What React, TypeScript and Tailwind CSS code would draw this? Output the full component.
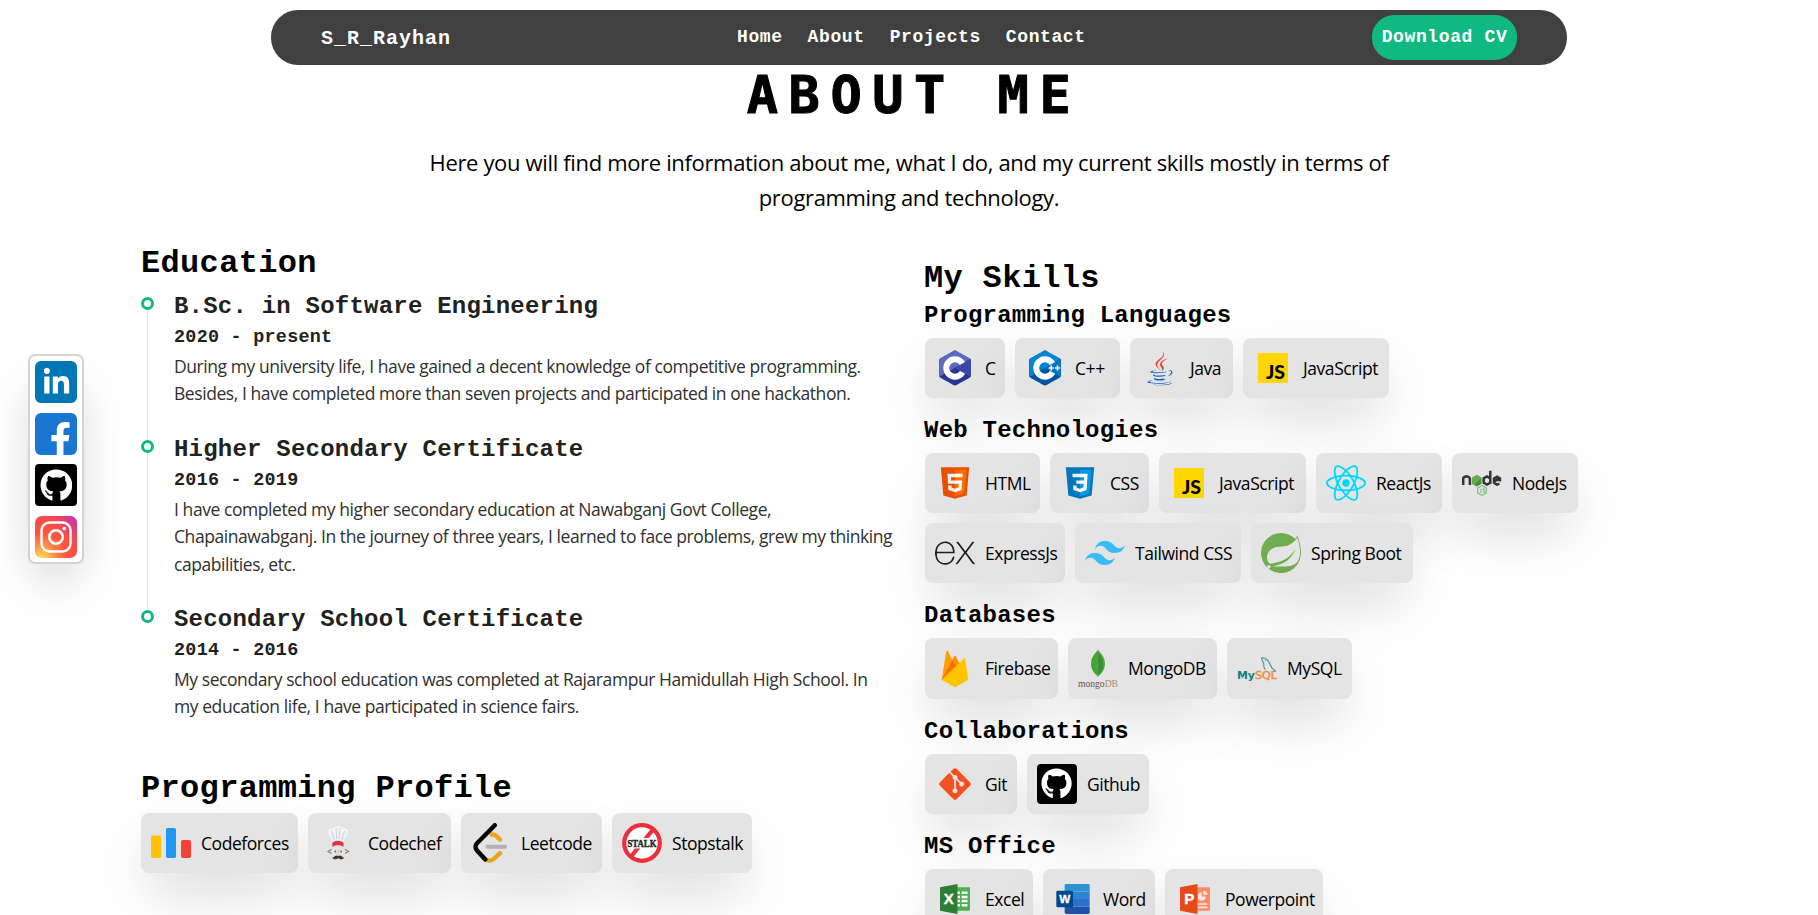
import React from 'react';
import { FaGithub, FaJava, FaLinkedinIn, FaFacebookF } from 'react-icons/fa';
import { SiExpress, SiTailwindcss, SiReact, SiSpring } from 'react-icons/si';

const MONO = "font-['Liberation_Mono',monospace] font-bold whitespace-pre";

const HEX =
  'M22.903,3.286c0.679-0.381,1.515-0.381,2.193,0c3.355,1.883,13.451,7.551,16.807,9.434C42.582,13.1,43,13.804,43,14.566c0,3.766,0,15.101,0,18.867c0,0.762-0.418,1.466-1.097,1.847c-3.355,1.883-13.451,7.551-16.807,9.434c-0.679,0.381-1.515,0.381-2.193,0c-3.355-1.883-13.451-7.551-16.807-9.434C5.418,34.899,5,34.196,5,33.434c0-3.766,0-15.101,0-18.867c0-0.762,0.418-1.466,1.097-1.847C9.451,10.837,19.549,5.169,22.903,3.286z';

function HexC({ base, top, side, plus }: { base: string; top: string; side: string; plus?: boolean }) {
  return (
    <svg viewBox="0 0 48 48" className="size-10">
      <path fill={base} d={HEX} />
      <path
        fill={top}
        d="M5.304,34.404C5.038,34.048,5,33.71,5,33.255c0-3.744,0-15.014,0-18.759c0-0.758,0.417-1.458,1.094-1.836c3.343-1.872,13.405-7.507,16.748-9.38c0.677-0.379,1.594-0.371,2.271,0.008c3.343,1.872,13.371,7.459,16.714,9.331c0.27,0.152,0.476,0.335,0.66,0.576L5.304,34.404z"
      />
      <circle cx="24" cy="24" r="10.5" fill="none" stroke="#fff" strokeWidth="7" />
      <path
        fill={side}
        d="M42.485,13.205c0.516,0.483,0.506,1.211,0.506,1.784c0,3.795-0.032,14.589,0.009,18.384c0.004,0.396-0.127,0.813-0.323,1.127L23.593,24L42.485,13.205z"
      />
      {plus && <path d="M28.5 24h6M31.5 21v6M36 24h6M39 21v6" stroke="#fff" strokeWidth="2" />}
    </svg>
  );
}

const IconC = () => <HexC base="#283593" top="#5c6bc0" side="#3949ab" />;
const IconCpp = () => <HexC base="#00549d" top="#0086d4" side="#0075c0" plus />;

const IconJava = () => (
  <svg viewBox="0 0 40 40" className="size-10">
    <defs>
      <linearGradient id="java" x1="0" y1="0" x2="0" y2="512" gradientUnits="userSpaceOnUse">
        <stop offset="0.5" stopColor="#f44336" />
        <stop offset="0.5" stopColor="#1565c0" />
      </linearGradient>
    </defs>
    <FaJava x={3} y={3.5} size={34} fill="url(#java)" />
  </svg>
);

const IconJs = () => (
  <svg viewBox="0 0 48 48" className="size-10">
    <path fill="#ffd600" d="M6,42V6h36v36H6z" />
    <text x="38.5" y="37.5" textAnchor="end" fontFamily="Lato" fontWeight="900" fontSize="22" textLength="23" lengthAdjust="spacingAndGlyphs">
      JS
    </text>
  </svg>
);

const IconHtml = () => (
  <svg viewBox="0 0 48 48" className="size-10">
    <path fill="#E65100" d="M41,5H7l3,34l14,4l14-4L41,5z" />
    <path fill="#FF6D00" d="M24 8L24 39.9 35.2 36.7 37.7 8z" />
    <path fill="#fff" d="M24,25v-4h8.6l-0.7,11.5L24,35.1v-4.2l4.1-1.4l0.3-4.5H24z M32.9,17l0.3-4H24v4H32.9z" />
    <path fill="#eee" d="M24,30.9v4.2l-7.9-2.6L15.7,27h4l0.2,2.5L24,30.9z M19.1,17H24v-4h-9.1l0.7,12H24v-4h-4.6L19.1,17z" />
  </svg>
);

const IconCss = () => (
  <svg viewBox="0 0 48 48" className="size-10">
    <path fill="#0277BD" d="M41,5H7l3,34l14,4l14-4L41,5z" />
    <path fill="#039BE5" d="M24 8L24 39.9 35.2 36.7 37.7 8z" />
    <path fill="#fff" d="M33.1 13L24 13 24 17 28.9 17 28.6 21 24 21 24 25 28.4 25 28.1 29.5 24 30.9 24 35.1 31.9 32.5 32.6 21z" />
    <path fill="#eee" d="M24,13v4h-8.9l-0.3-4H24z M19.4,21l0.2,4H24v-4H19.4z M19.8,27h-4l0.3,5.5l7.9,2.6v-4.2l-4.1-1.4L19.8,27z" />
  </svg>
);

const IconReact = () => <SiReact size={40} color="#00d8ff" />;

const IconNode = () => (
  <svg viewBox="0 0 40 40" className="size-10">
    <g transform="translate(0 3)">
      <g fill="none" stroke="#333" strokeWidth="2.5">
        <path d="M1.2 19v-6.3q0-1 1-1.5l1.5-.7q1-.4 2 .1l1.2.6q1 .6 1 1.5V19" />
        <path d="M28.3 4.8v12l-3.3 1.8-3.3-1.8v-4.5l3.3-1.8 3.3 1.8" />
        <path d="M38 15.5v-3l-3-1.8-3 1.8v4.4l3 1.8 2.4-1M32.5 15l4.5-2" />
      </g>
      <path fill="#429334" d="M14.8 9l4.7 2.7v6l-4.7 2.7-4.7-2.7v-6z" />
      <path fill="#66ad50" d="M14.8 9l4.7 2.7-7.3 7.4-2.1-1.3v-6z" />
    </g>
    <path d="M20 22.6l4.3 2.5v4.9L20 32.4l-4.3-2.4v-4.9z" fill="none" stroke="#7fb97a" strokeWidth="1.2" />
    <path d="M19 25.5v4l-1.4.5M23 25.8h-2v1.5l1.8.5v1.6h-2" fill="none" stroke="#7fb97a" strokeWidth=".9" />
  </svg>
);

const IconExpress = () => <SiExpress size={40} color="#1c1c1c" />;
const IconTailwind = () => <SiTailwindcss size={40} color="#38bdf8" />;
const IconSpring = () => <SiSpring size={40} color="#70ad51" />;

const IconFirebase = () => (
  <svg viewBox="0 0 48 48" className="size-10">
    <path fill="#ff8f00" d="M8,37L23.234,8.436c0.321-0.602,1.189-0.591,1.494,0.02L30,19L8,37z" />
    <path fill="#ffa000" d="M8,36.992l5.546-34.199c0.145-0.895,1.347-1.089,1.767-0.285L26,22.992L8,36.992z" />
    <path fill="#ff6f00" d="M8.008 36.986L8.208 36.829 25.737 22.488 20.793 13.012z" />
    <path fill="#ffc400" d="M8,37l26.666-25.713c0.559-0.539,1.492-0.221,1.606,0.547L40,37l-15,8.743c-0.609,0.342-1.352,0.342-1.961,0L8,37z" />
  </svg>
);

const IconMongo = () => (
  <svg viewBox="0 0 40 40" className="size-10">
    <path fill="#4faa41" d="M20 .5c1 2.4 7 6.5 7 14.3 0 7-4.5 10.5-6.5 12.2L20 28.5z" />
    <path fill="#45a538" d="M20 .5c-1 2.4-7 6.5-7 14.3 0 7 4.5 10.5 6.5 12.2l.5 1.5z" />
    <path fill="#3a8f33" d="M20.3 4c3 4 5 7 5 11.5 0 5-3 9-5 11z" />
    <text x="0" y="37.8" fontFamily="Liberation Serif" fontSize="9.5" fill="#6b4f45" textLength="40" lengthAdjust="spacingAndGlyphs">
      mongo<tspan fill="#a88f72">DB</tspan>
    </text>
  </svg>
);

const IconMysql = () => (
  <svg viewBox="0 0 40 40" className="size-10">
    <path
      d="M28.5 20.5c-1.800-1.500-2-3.500-1.600-5.500-1-2-2-4.300-2.400-6.200 2.500-.3 5.300 1.200 6.800 3.300 1.500 2.200 2.700 5 3.500 6.800 1 1.200 2.600 2 3.700 3.400l-3.300.2"
      fill="none"
      stroke="#3f9693"
      strokeWidth="1.100"
      strokeLinejoin="round"
    />
    <circle cx="28.200" cy="11.300" r=".6" fill="#3f9693" />
    <text x="0" y="30" fontFamily="DejaVu Sans" fontWeight="700" fontSize="10.5" fill="#118179" textLength="18" lengthAdjust="spacingAndGlyphs">
      My
    </text>
    <text x="18" y="30" fontFamily="DejaVu Sans" fontSize="10.5" fill="#f08d3c" stroke="#f08d3c" strokeWidth=".5" textLength="22" lengthAdjust="spacingAndGlyphs">
      SQL
    </text>
  </svg>
);

const IconGit = () => (
  <svg viewBox="0 0 48 48" className="size-10">
    <path
      fill="#F4511E"
      d="M42.2,22.1L25.9,5.8C25.4,5.3,24.7,5,24,5c-0.7,0-1.4,0.3-1.9,0.8l-3.5,3.5l4.1,4.1c0.4-0.2,0.8-0.3,1.3-0.3c1.7,0,3,1.3,3,3c0,0.5-0.1,0.9-0.3,1.3l4,4c0.4-0.2,0.8-0.3,1.3-0.3c1.7,0,3,1.3,3,3s-1.3,3-3,3c-1.7,0-3-1.3-3-3c0-0.5,0.1-0.9,0.3-1.3l-4-4c-0.1,0-0.2,0.1-0.3,0.1v10.4c1.2,0.4,2,1.5,2,2.8c0,1.7-1.3,3-3,3s-3-1.3-3-3c0-1.3,0.8-2.4,2-2.8V18.8c-1.2-0.4-2-1.5-2-2.8c0-0.5,0.1-0.9,0.3-1.3l-4.1-4.1L5.8,22.1C5.3,22.6,5,23.3,5,24c0,0.7,0.3,1.4,0.8,1.9l16.3,16.3c0.5,0.5,1.2,0.8,1.9,0.8s1.4-0.3,1.9-0.8l16.3-16.3c0.5-0.5,0.8-1.2,0.8-1.9C43,23.3,42.7,22.6,42.2,22.1z"
    />
  </svg>
);

const IconGithub = () => (
  <span className="flex size-full items-center justify-center rounded-[4px] bg-black">
    <FaGithub className="size-[78%] text-white" />
  </span>
);

const IconExcel = () => (
  <svg viewBox="0 0 48 48" className="size-10">
    <path fill="#4CAF50" d="M41,10H25v28h16c0.553,0,1-0.447,1-1V11C42,10.447,41.553,10,41,10z" />
    <path fill="#fff" d="M32 15h7v3h-7zM32 20h7v3h-7zM32 25h7v3h-7zM32 30h7v3h-7zM25 15h5v3h-5zM25 20h5v3h-5zM25 25h5v3h-5zM25 30h5v3h-5z" />
    <path fill="#2E7D32" d="M27 42L6 38 6 10 27 6z" />
    <text x="16.5" y="30.5" textAnchor="middle" fontFamily="Liberation Sans" fontWeight="700" fontSize="18" fill="#fff" stroke="#fff" strokeWidth=".5">
      X
    </text>
  </svg>
);

const IconWord = () => (
  <svg viewBox="0 0 48 48" className="size-10">
    <path fill="#2d92d4" d="M42.256,6H15.744C14.781,6,14,6.781,14,7.744v7.259h30V7.744C44,6.781,43.219,6,42.256,6z" />
    <path fill="#2150a9" d="M14,33.054v7.202C14,41.219,14.781,42,15.743,42h26.513C43.219,42,44,41.219,44,40.256v-7.202H14z" />
    <path fill="#2d83d4" d="M14 15.003H44V24.005H14z" />
    <path fill="#2e70c9" d="M14 24.005H44V33.055H14z" />
    <rect x="4" y="14" width="20" height="20" rx="1.7" fill="#00488d" />
    <text x="14" y="29" textAnchor="middle" fontFamily="Liberation Sans" fontWeight="700" fontSize="14" fill="#fff" stroke="#fff" strokeWidth=".4">
      W
    </text>
  </svg>
);

const IconPpt = () => (
  <svg viewBox="0 0 48 48" className="size-10">
    <path fill="#FF8A65" d="M41,10H25v28h16c0.553,0,1-0.447,1-1V11C42,10.447,41.553,10,41,10z" />
    <path fill="#FBE9E7" d="M27 29h12v2H27zM27 33h12v2H27zM32 16a5 5 0 1 0 5 5h-5z" />
    <path fill="#FBE9E7" d="M34 14v5h5a5 5 0 0 0-5-5z" />
    <path fill="#E64A19" d="M27 42L6 38 6 10 27 6z" />
    <text x="17" y="30.5" textAnchor="middle" fontFamily="Liberation Sans" fontWeight="700" fontSize="18" fill="#fff" stroke="#fff" strokeWidth=".5">
      P
    </text>
  </svg>
);

const IconCodeforces = () => (
  <svg viewBox="0 0 40 40" className="size-10">
    <rect x="0" y="12.5" width="10" height="22.5" rx="1.7" fill="#ffc107" />
    <rect x="15" y="5" width="10" height="30" rx="1.7" fill="#2196f3" />
    <rect x="30" y="17" width="10" height="18" rx="1.7" fill="#f44336" />
  </svg>
);

const IconCodechef = () => (
  <svg viewBox="0 0 40 40" className="size-10">
    <path
      fill="#eff1f4"
      stroke="#d3d7de"
      strokeWidth=".5"
      d="M14.5 19C13 15 8.500 12 9 8.500c.7-3.300 4-4 6-3.700C16 3 18 2.500 20 2.500s4 .5 5 2.300c2-.3 5.300.4 6 3.700C31.500 12 27 15 25.800 19c-3.500-1.800-8-1.800-11.300 0z"
    />
    <path d="M13.500 8l2.800 9M18 5l.8 11M22 5l-.8 11M26.500 8l-2.500 9" stroke="#c3cbd8" strokeWidth=".8" fill="none" />
    <path fill="#dc3545" d="M14.200 20c3.500-3 8-3 11.500 0l-.4 4c-2-2.400-8.500-2.400-10.700 0z" />
    <path d="M13.500 26.500l-3.500 2 3.500 2M27 26.500l3.500 2-3.500 2" fill="none" stroke="#8a7a74" strokeWidth="1.100" />
    <circle cx="17.300" cy="28.500" r=".9" fill="#7b6058" />
    <circle cx="23" cy="28.500" r=".9" fill="#7b6058" />
    <path d="M20.200 26.500v4" stroke="#c9bdb5" strokeWidth="1" />
    <path
      fill="#4a2f2a"
      d="M20.200 33c-2-1.300-3.700 0-4.200 1-.6.800-1.300.7-1.800.2.300 2.300 4.200 3 6 .8 1.800 2.200 5.700 1.500 6-.8-.5.500-1.200.6-1.800-.2-.5-1-2.200-2.300-4.200-1z"
    />
  </svg>
);

const IconLeetcode = () => (
  <svg viewBox="0 0 40 40" className="size-10" fill="none" strokeWidth="4.4" strokeLinecap="round">
    <path stroke="#b3b3b3" strokeWidth="4" d="M16.5 23.8h17.5" />
    <path stroke="#eba51c" d="M20.5 11.5c1.8-.4 3.5.3 4.7 1.5l3.8 3.700" />
    <path stroke="#eba51c" d="M12.5 34.500c3.500 4 7.500 4 10.700 1l5.800-5.300" />
    <path stroke="#070707" d="M23.800 2.200L6 20.200c-2 2-2 5.200 0 7.200l8.300 9" strokeLinejoin="round" />
  </svg>
);

const IconStopstalk = () => (
  <svg viewBox="0 0 40 40" className="size-10">
    <circle cx="20" cy="20" r="17.8" fill="#fff" stroke="#ee2e3a" strokeWidth="4.2" />
    <path d="M9 33.500L31 6.500" stroke="#ee2e3a" strokeWidth="4.2" />
    <path d="M5.500 15h29v10.500h-29z" fill="#fff" />
    <text
      x="20"
      y="24"
      textAnchor="middle"
      fontFamily="Liberation Serif"
      fontWeight="700"
      fontSize="10.5"
      fill="#222"
      stroke="#222"
      strokeWidth=".4"
      textLength="29"
      lengthAdjust="spacingAndGlyphs"
    >
      STALK
    </text>
  </svg>
);

type Skill = { label: string; w: string; icon: React.FC };

function Chip({ label, w, icon: Icon }: Skill) {
  return (
    <div className={`flex min-h-[60px] items-center gap-[10px] rounded-lg bg-[#e4e4e4] pl-[10px] shadow-[0_25px_55px_-7px_rgba(0,0,0,0.16)] ${w}`}>
      <span className="size-10 shrink-0">
        <Icon />
      </span>
      <span className="text-[17.5px] tracking-[-0.44px] whitespace-nowrap text-black">{label}</span>
    </div>
  );
}

const groups: { title: string; items: Skill[] }[] = [
  {
    title: 'Programming Languages',
    items: [
      { label: 'C', w: 'w-20', icon: IconC },
      { label: 'C++', w: 'w-[105px]', icon: IconCpp },
      { label: 'Java', w: 'w-[103px]', icon: IconJava },
      { label: 'JavaScript', w: 'w-[146px]', icon: IconJs },
    ],
  },
  {
    title: 'Web Technologies',
    items: [
      { label: 'HTML', w: 'w-[115px]', icon: IconHtml },
      { label: 'CSS', w: 'w-[99px]', icon: IconCss },
      { label: 'JavaScript', w: 'w-[147px]', icon: IconJs },
      { label: 'ReactJs', w: 'w-[126px]', icon: IconReact },
      { label: 'NodeJs', w: 'w-[126px]', icon: IconNode },
      { label: 'ExpressJs', w: 'w-[140px]', icon: IconExpress },
      { label: 'Tailwind CSS', w: 'w-[166px]', icon: IconTailwind },
      { label: 'Spring Boot', w: 'w-[162px]', icon: IconSpring },
    ],
  },
  {
    title: 'Databases',
    items: [
      { label: 'Firebase', w: 'w-[133px]', icon: IconFirebase },
      { label: 'MongoDB', w: 'w-[149px] h-[61px]', icon: IconMongo },
      { label: 'MySQL', w: 'w-[125px]', icon: IconMysql },
    ],
  },
  {
    title: 'Collaborations',
    items: [
      { label: 'Git', w: 'w-[92px]', icon: IconGit },
      { label: 'Github', w: 'w-[122px]', icon: IconGithub },
    ],
  },
  {
    title: 'MS Office',
    items: [
      { label: 'Excel', w: 'w-[108px]', icon: IconExcel },
      { label: 'Word', w: 'w-[112px]', icon: IconWord },
      { label: 'Powerpoint', w: 'w-[158px]', icon: IconPpt },
    ],
  },
];

const profiles: Skill[] = [
  { label: 'Codeforces', w: 'w-[157px]', icon: IconCodeforces },
  { label: 'Codechef', w: 'w-[143px]', icon: IconCodechef },
  { label: 'Leetcode', w: 'w-[141px]', icon: IconLeetcode },
  { label: 'Stopstalk', w: 'w-[140px]', icon: IconStopstalk },
];

const education = [
  {
    title: 'B.Sc. in Software Engineering',
    date: '2020 - present',
    h: 'h-[143px]',
    lines: [
      'During my university life, I have gained a decent knowledge of competitive programming.',
      'Besides, I have completed more than seven projects and participated in one hackathon.',
    ],
  },
  {
    title: 'Higher Secondary Certificate',
    date: '2016 - 2019',
    h: 'h-[170px]',
    lines: [
      'I have completed my higher secondary education at Nawabganj Govt College,',
      'Chapainawabganj. In the journey of three years, I learned to face problems, grew my thinking',
      'capabilities, etc.',
    ],
  },
  {
    title: 'Secondary School Certificate',
    date: '2014 - 2016',
    h: 'h-[143px]',
    lines: [
      'My secondary school education was completed at Rajarampur Hamidullah High School. In',
      'my education life, I have participated in science fairs.',
    ],
  },
];

function Navbar() {
  return (
    <nav className="absolute top-[10px] left-[271px] z-10 flex h-[55px] w-[1296px] items-center rounded-[27px] bg-[#404040] text-white">
      <span className={`${MONO} w-[416px] pt-[2px] pl-[50px] text-[20px] tracking-[1px]`}>S_R_Rayhan</span>
      <div className={`${MONO} flex flex-1 gap-[25px] pl-[50px] text-[18px] tracking-[0.6px]`}>
        <a>Home</a>
        <a>About</a>
        <a>Projects</a>
        <a>Contact</a>
      </div>
      <button className={`${MONO} mr-[50px] h-[45px] w-[145px] rounded-[22px] bg-[#10b981] text-[18px] tracking-[0.62px]`}>
        Download CV
      </button>
    </nav>
  );
}

function SocialBar() {
  return (
    <aside className="absolute top-[354px] left-7 flex h-[210px] w-14 flex-col items-center gap-[9.5px] rounded-[7px] border-2 border-[#d4d4d8] bg-white pt-[5px] shadow-[0_25px_50px_-12px_rgba(0,0,0,0.25)]">
      <span className="flex size-[42px] shrink-0 items-center justify-center rounded-[6px] bg-[#0077b5]">
        <FaLinkedinIn className="size-[29px] text-white" />
      </span>
      <span className="flex size-[42px] shrink-0 items-end justify-end overflow-hidden rounded-[6px] bg-[#1976d2] pr-[4px]">
        <FaFacebookF className="-mb-px h-[34px] w-[25px] text-white" />
      </span>
      <span className="size-[42px] shrink-0">
        <IconGithub />
      </span>
      <svg viewBox="0 0 42 42" className="size-[42px] shrink-0" fill="none">
        <defs>
          <radialGradient id="ig1" cx="0.15" cy="1" r="1">
            <stop offset="0" stopColor="#fd5" />
            <stop offset="0.33" stopColor="#ff8c4b" />
            <stop offset="0.6" stopColor="#ff543f" />
            <stop offset="1" stopColor="#f4484f" />
          </radialGradient>
          <radialGradient id="ig2" cx="1" cy="0" r="0.6">
            <stop offset="0" stopColor="#b735c0" />
            <stop offset="1" stopColor="#e23b7a" stopOpacity="0" />
          </radialGradient>
        </defs>
        <rect width="42" height="42" rx="7" fill="url(#ig1)" />
        <rect width="42" height="42" rx="7" fill="url(#ig2)" />
        <rect x="6.5" y="6.5" width="29" height="29" rx="8" stroke="#fff" strokeWidth="2.4" />
        <circle cx="21" cy="21" r="6.7" stroke="#fff" strokeWidth="2.6" />
        <circle cx="29.2" cy="12.6" r="1.8" fill="#fff" />
      </svg>
    </aside>
  );
}

export default function App() {
  return (
    <div className="relative h-[915px] w-[1818px] overflow-hidden bg-white font-['Open_Sans','Noto_Sans',sans-serif] text-black">
      <Navbar />
      <SocialBar />
      <header className="flex h-[220px] flex-col items-center pt-[65px]">
        <h1 className="pl-[10px] font-['DejaVu_Sans_Mono',monospace] text-[52px] leading-[60px] font-bold tracking-[10.5px] [-webkit-text-stroke:1px_black]">
          ABOUT ME
        </h1>
        <p className="mt-[20px] text-center text-[22px] leading-[35px] tracking-[-0.34px] whitespace-nowrap">
          Here you will find more information about me, what I do, and my current skills mostly in terms of
          <br />
          programming and technology.
        </p>
      </header>
      <main className="flex pl-[141px]">
        <section className="w-[784px] pt-[20px]">
          <h2 className={`${MONO} h-[46px] text-[32px] leading-[48px] tracking-[0.33px]`}>Education</h2>
          <ol className="mt-1 text-[#212121]">
            {education.map((e, i) => (
              <li key={e.title} className={`flex ${e.h}`}>
                <div className="flex w-[33px] flex-col">
                  <div className="flex h-full w-[13px] flex-col items-center">
                    <div className={i === 0 ? 'h-[7px]' : 'h-[7px] w-[1.5px] bg-[#e5e5e5]'} />
                    <div className="size-[13px] shrink-0 rounded-full border-3 border-[#10b981]" />
                    {i < 2 && <div className="w-[1.5px] flex-1 bg-[#e5e5e5]" />}
                  </div>
                </div>
                <div>
                  <h3 className={`${MONO} h-[32px] text-[24px] leading-[34px] tracking-[0.22px]`}>{e.title}</h3>
                  <p className={`${MONO} h-[29px] text-[18.4px] leading-[31px] tracking-[0.28px]`}>{e.date}</p>
                  <p className="mt-[2px] text-[17.5px] leading-[27.3px] tracking-[-0.43px] whitespace-nowrap text-[#303030]">
                    {e.lines.map((l) => (
                      <span key={l} className="block">
                        {l}
                      </span>
                    ))}
                  </p>
                </div>
              </li>
            ))}
          </ol>
          <h2 className={`${MONO} mt-[18px] h-[48px] text-[32px] leading-[50px] tracking-[0.33px]`}>Programming Profile</h2>
          <div className="mt-[1px] flex gap-[10px]">
            {profiles.map((p) => (
              <Chip key={p.label} {...p} />
            ))}
          </div>
        </section>
        <section className="w-[680px] pt-[33px]">
          <h2 className={`${MONO} -ml-px h-[40px] text-[32px] leading-[51px] tracking-[0.33px]`}>My Skills</h2>
          {groups.map((g) => (
            <div key={g.title}>
              <h3 className={`${MONO} -ml-px flex h-[45px] items-center pt-[1px] text-[24px] tracking-[0.24px]`}>{g.title}</h3>
              <div className="mb-[10px] flex flex-wrap gap-[10px]">
                {g.items.map((s) => (
                  <Chip key={s.label} {...s} />
                ))}
              </div>
            </div>
          ))}
        </section>
      </main>
    </div>
  );
}
